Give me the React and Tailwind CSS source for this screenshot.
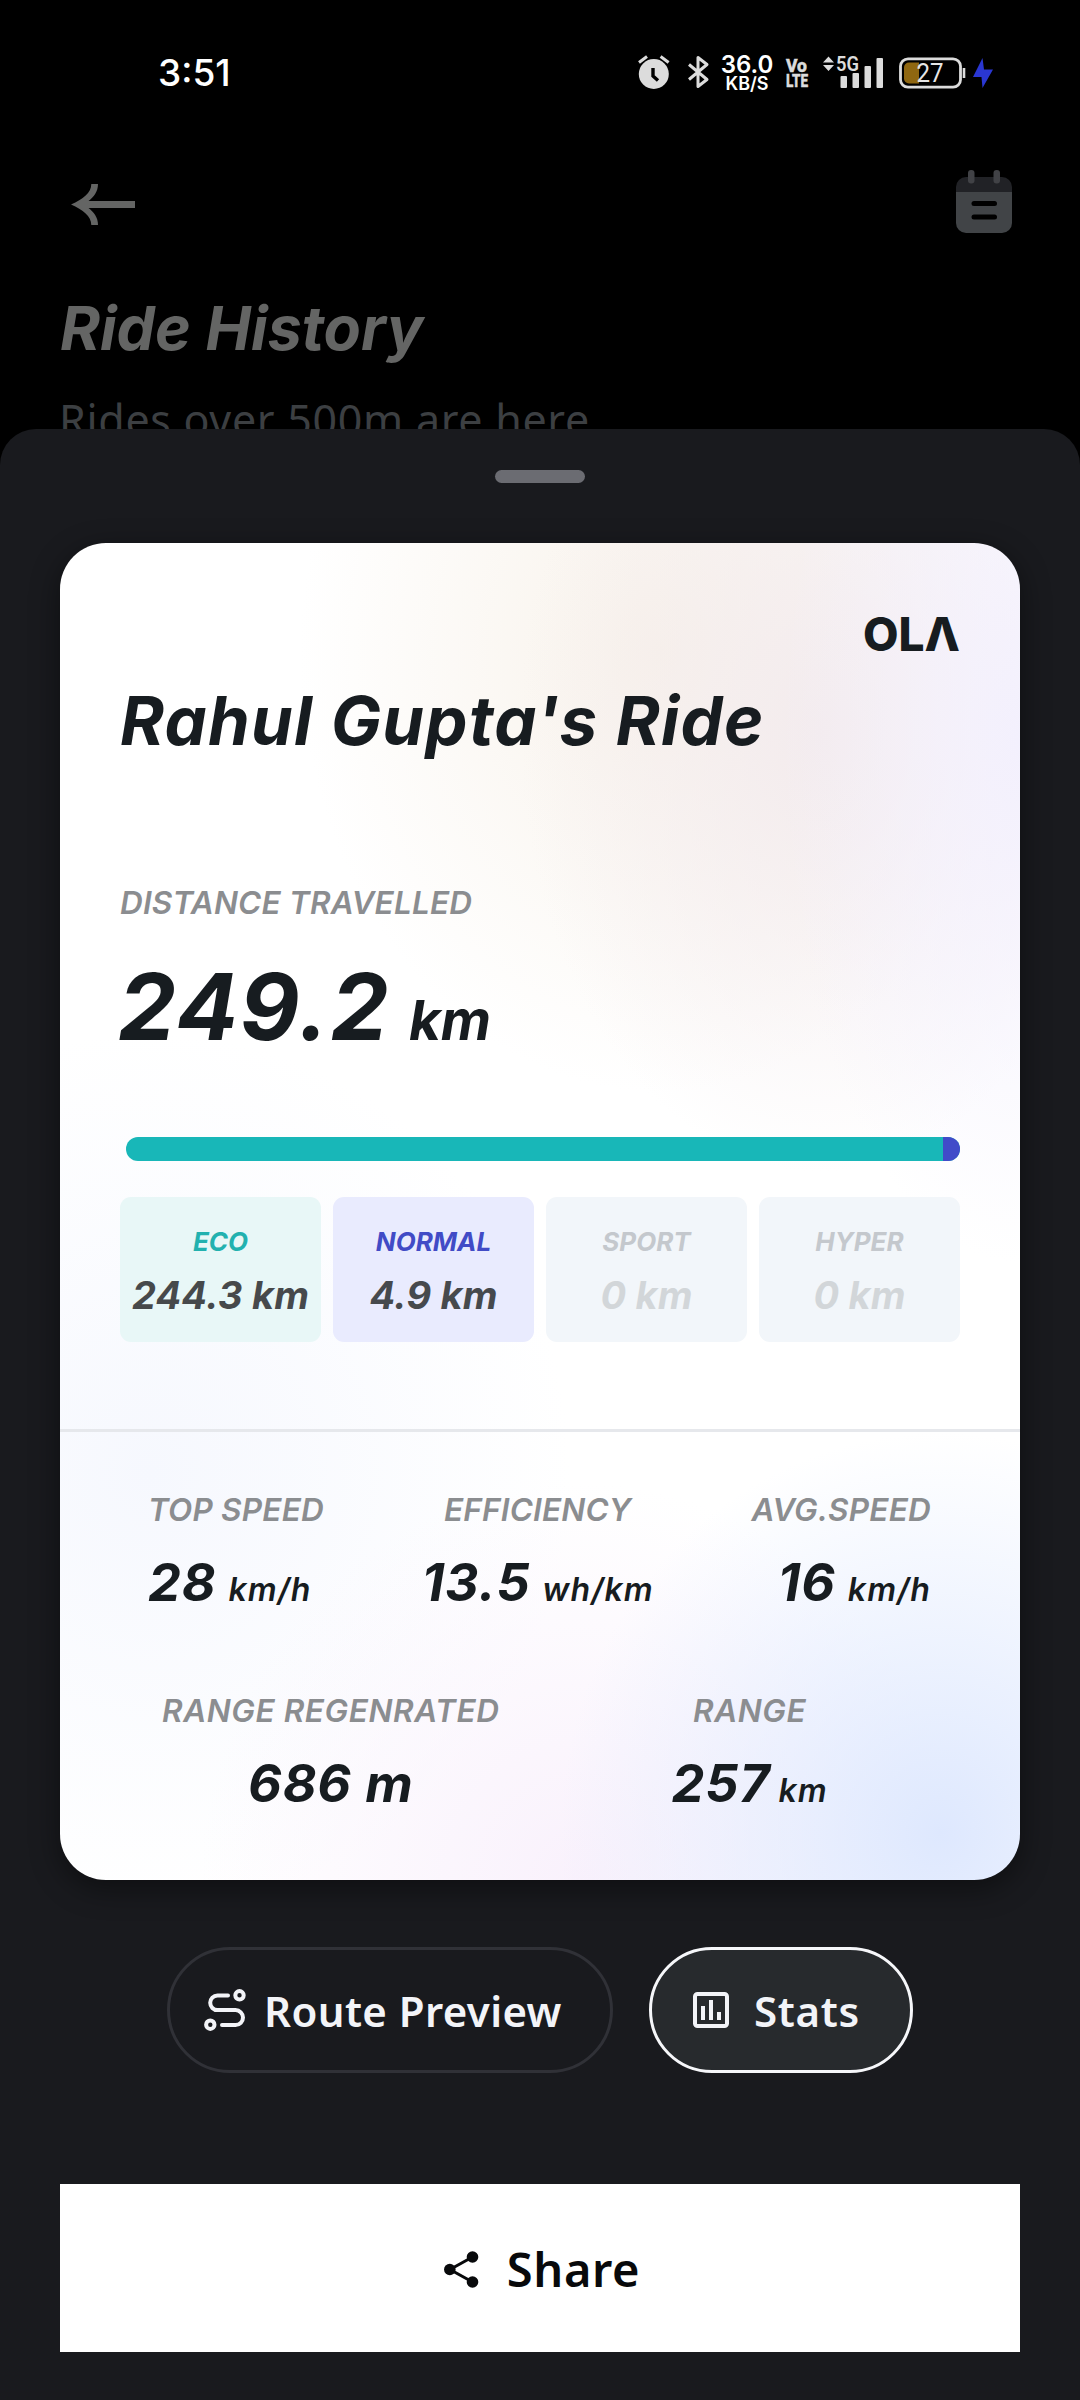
import clsx from "clsx";

const MODES = [
  { name: "ECO", value: "244.3 km", box: "bg-[#e8f7f7]", label: "text-[#22b1af]", text: "text-[#46494b]" },
  { name: "NORMAL", value: "4.9 km", box: "bg-[#e9ebfe]", label: "text-[#414bc6]", text: "text-[#46494d]" },
  { name: "SPORT", value: "0 km", box: "bg-[#f2f6fa]", label: "text-[#c4c8cd]", text: "text-[#d2d6d9]" },
  { name: "HYPER", value: "0 km", box: "bg-[#f2f6fa]", label: "text-[#c4c8cd]", text: "text-[#d2d6d9]" },
];

const AlarmIcon = () => (
  <svg width="32" height="34" viewBox="0 0 32 34" fill="none">
    <circle cx="15.8" cy="19" r="15" fill="#dcdcdc" />
    <path d="M1 7.5 9 1.5M30.6 7.5 22.6 1.5" stroke="#dcdcdc" strokeWidth="3" />
    <path d="M15 13v8l5 4.5" stroke="#000" strokeWidth="3.4" />
  </svg>
);

const BluetoothIcon = () => (
  <svg width="22" height="34" viewBox="0 0 22 34" fill="none">
    <path
      d="M1 9.5 19 24.5 10 31.5V2.5l9 7L1 24.5"
      stroke="#dcdcdc"
      strokeWidth="3"
      strokeLinejoin="round"
    />
  </svg>
);

const VolteIcon = () => (
  <svg
    width="22"
    height="32"
    viewBox="0 0 22 32"
    fill="#dcdcdc"
    stroke="#dcdcdc"
    strokeWidth="0.5"
    fontFamily="Roboto, sans-serif"
    fontWeight="800"
    fontSize="18.5"
    className="overflow-visible"
  >
    <text x="0" y="14.5" textLength="21" lengthAdjust="spacingAndGlyphs">Vo</text>
    <text x="0" y="30" textLength="22" lengthAdjust="spacingAndGlyphs">LTE</text>
  </svg>
);

const SignalIcon = () => (
  <svg width="60" height="34" viewBox="0 0 60 34" fill="#dcdcdc" className="overflow-visible">
    <path d="M0 7.5 5.5 1.5 11 7.5ZM0 10 5.5 16 11 10Z" />
    <text x="13" y="16" fontSize="20" fontFamily="Roboto, sans-serif" fontWeight="600" textLength="23" lengthAdjust="spacingAndGlyphs">5G</text>
    <rect x="17.5" y="21" width="6.5" height="12" rx="1" />
    <rect x="29.5" y="18" width="6.5" height="15" rx="1" />
    <rect x="41.5" y="11" width="6.5" height="22" rx="1" />
    <rect x="53.5" y="3" width="6.5" height="30" rx="1" />
  </svg>
);

const BatteryIcon = () => (
  <svg width="67" height="32" viewBox="0 0 67 32" fill="none">
    <rect x="1.5" y="1.8" width="60" height="28.4" rx="7.5" stroke="#dcdcdc" strokeWidth="2.8" />
    <path d="M20 5.5H10a5 5 0 0 0-5 5v11a5 5 0 0 0 5 5H20Z" fill="#8f6711" />
    <path d="M65 11v10" stroke="#dcdcdc" strokeWidth="2.6" />
    <text x="17.5" y="24.5" fontSize="25" fontFamily="Roboto, sans-serif" fill="#e6e6e6" textLength="27" lengthAdjust="spacingAndGlyphs">27</text>
  </svg>
);

const BoltIcon = () => (
  <svg width="20" height="30" viewBox="0 0 20 30">
    <path d="M9.5 0 0 19h8.5L9.5 30 20 11.5h-9Z" fill="#2a37d2" />
  </svg>
);

const BackIcon = () => (
  <svg width="64" height="41" viewBox="0 0 64 41" className="mt-[5px]">
    <path
      d="M0 20.5C12 15 20.3 9 20.3 0H27c0 8-4.5 13-9.5 17H64v7H17.5C22.5 28 27 33 27 41h-6.7C20.3 32 12 26 0 20.5Z"
      fill="#646564"
    />
  </svg>
);

const CalendarIcon = () => (
  <svg width="56" height="63" viewBox="0 0 56 63" className="mb-px">
    <path d="M0 22V17A10 10 0 0 1 10 7H46A10 10 0 0 1 56 17V22Z" fill="#212226" />
    <path d="M0 22H56V53A10 10 0 0 1 46 63H10A10 10 0 0 1 0 53Z" fill="#414447" />
    <rect x="12" y="0" width="6.5" height="13.5" rx="3" fill="#414246" />
    <rect x="37.5" y="0" width="6.5" height="13.5" rx="3" fill="#414246" />
    <rect x="15.5" y="31" width="25.5" height="5" rx="2.5" fill="#000" />
    <rect x="15.5" y="44.5" width="25.5" height="5" rx="2.5" fill="#000" />
  </svg>
);

const RouteIcon = () => (
  <svg width="42" height="42" viewBox="0 0 42 42" fill="none" stroke="#f3f4f8" strokeWidth="4" strokeLinecap="round">
    <circle cx="35.5" cy="6.3" r="4.2" />
    <circle cx="6.3" cy="35.7" r="4.2" />
    <path d="M24 6.5H13.5a7.3 7.3 0 0 0 0 14.6H31.5a7.5 7.5 0 0 1 0 15H18" />
  </svg>
);

const StatsIcon = () => (
  <svg width="36" height="36" viewBox="0 0 36 36" fill="none" stroke="#f3f4f8" strokeWidth="4">
    <rect x="2" y="2" width="32" height="32" rx="2.5" />
    <path d="M10 14v14M18 8v20M26 20v8" />
  </svg>
);

const ShareIcon = () => (
  <svg width="35" height="37" viewBox="0 0 35 37" fill="#08090b">
    <path d="M28.5 6 6 18.5 28.5 31" fill="none" stroke="#08090b" strokeWidth="3" />
    <circle cx="28.5" cy="6" r="5.8" />
    <circle cx="5.8" cy="18.5" r="5.8" />
    <circle cx="28.5" cy="31" r="5.8" />
  </svg>
);

const Label = ({ children, className }) => (
  <p
    className={clsx(
      "text-[31.5px] leading-[40px] font-semibold whitespace-nowrap text-[#8b8d90] italic",
      className
    )}
  >
    {children}
  </p>
);

const Stat = ({ label, value, unit, align, gap = "gap-[12px]", labelClass = "tracking-[0.2px]" }) => (
  <div className={clsx("flex flex-col gap-[23px]", align)}>
    <Label className={labelClass}>{label}</Label>
    <div className={clsx("flex h-[60px] items-baseline whitespace-nowrap text-[#171c20] italic", gap)}>
      <span className="text-[52px] leading-[60px] font-bold tracking-[0.9px]">{value}</span>
      {unit && <span className="text-[32px] leading-none font-semibold tracking-[1.1px]">{unit}</span>}
    </div>
  </div>
);

const StatusBar = () => (
  <div className="flex h-[146px] items-center justify-between pr-[87px] pl-[158px]">
    <span className="text-[37px] leading-[40px] font-medium text-white">3:51</span>
    <div className="flex items-center">
      <div className="mb-[2px] flex">
        <AlarmIcon />
      </div>
      <div className="mb-[2px] ml-[18px] flex">
        <BluetoothIcon />
      </div>
      <div className="ml-[12px] flex w-[50px] flex-col items-center pt-[2px] whitespace-nowrap text-white">
        <span className="text-[24px] leading-[19px] font-semibold">36.0</span>
        <span className="text-[18px] leading-[19px] font-semibold">KB/S</span>
      </div>
      <div className="mb-[1px] ml-[14px] flex">
        <VolteIcon />
      </div>
      <div className="mb-[3px] ml-[15px] flex">
        <SignalIcon />
      </div>
      <div className="mb-[1px] ml-[16px] flex">
        <BatteryIcon />
      </div>
      <div className="mb-[1px] ml-[7px] flex">
        <BoltIcon />
      </div>
    </div>
  </div>
);

const RideCard = () => (
  <div className="mx-[60px] mt-[60px] h-[1337px] overflow-hidden rounded-[46px] bg-white bg-[radial-gradient(ellipse_240px_520px_at_960px_200px,#f3f0fdff,#f3f0fd00),radial-gradient(ellipse_300px_440px_at_760px_190px,#f3ebedff,#f3ebed00),radial-gradient(ellipse_360px_440px_at_600px_110px,#f8f2eaff,#f8f2ea00),radial-gradient(ellipse_380px_400px_at_880px_1290px,#dee8feff,#dee8fe00),radial-gradient(ellipse_380px_400px_at_520px_1340px,#f9f1fcff,#f9f1fc00),radial-gradient(ellipse_420px_440px_at_90px_930px,#f6f8feff,#f6f8fe00)] font-[Inter,sans-serif] shadow-[0_8px_30px_rgba(0,0,0,0.45)]">
    <div className="px-[60px] pt-[74px]">
      <div className="flex h-[34px] items-center justify-end">
        <span className="text-[46px] leading-[34px] font-extrabold text-[#171c20]">OLΛ</span>
      </div>
      <h2 className="mt-[30px] text-[67px] leading-[80px] font-bold tracking-[1.3px] whitespace-nowrap text-[#171c20] italic">
        Rahul Gupta's Ride
      </h2>
      <Label className="mt-[122px] tracking-[0.2px]">DISTANCE TRAVELLED</Label>
      <div className="mt-[34px] flex h-[100px] items-baseline gap-[19px] whitespace-nowrap text-[#171c20] italic">
        <span className="-ml-[2px] text-[92px] leading-[100px] font-bold tracking-[1.5px]">249.2</span>
        <span className="text-[55px] leading-none font-bold">km</span>
      </div>

      <div className="mt-[80px] ml-[6px] flex h-[24px] overflow-hidden rounded-full bg-[#18b7b8]">
        <div className="ml-auto w-[17px] bg-[#414bc9]" />
      </div>

      <div className="mt-[36px] grid grid-cols-4 gap-[12px]">
        {MODES.map((mode) => (
          <div
            key={mode.name}
            className={clsx(
              "flex h-[145px] flex-col items-center rounded-[11px] pt-[30px] whitespace-nowrap italic",
              mode.box
            )}
          >
            <span className={clsx("text-[26px] leading-[30px] font-bold", mode.label)}>{mode.name}</span>
            <span className={clsx("mt-[18px] text-[38px] leading-[40px] font-bold tracking-[0.2px]", mode.text)}>
              {mode.value}
            </span>
          </div>
        ))}
      </div>
    </div>

    <div className="mt-[87px] h-[3px] bg-[#e6e8ec]" />

    <div className="mt-[58px] flex justify-between pr-[89px] pl-[88px]">
      <Stat label="TOP SPEED" value="28" unit="km/h" />
      <Stat label="EFFICIENCY" value="13.5" unit="wh/km" align="items-center" />
      <Stat label="AVG.SPEED" value="16" unit="km/h" align="items-end" />
    </div>
    <div className="mt-[78px] flex gap-[172px] pl-[102px]">
      <Stat label="RANGE REGENRATED" value="686 m" align="items-center" labelClass="tracking-[0.6px]" />
      <Stat label="RANGE" value="257" unit="km" align="items-center" gap="gap-[8px]" labelClass="tracking-[0.6px]" />
    </div>
  </div>
);

export default function App() {
  return (
    <div className="flex h-[2400px] w-[1080px] flex-col overflow-hidden bg-black font-['Noto_Sans',sans-serif]">
      <header className="h-[429px] shrink-0 overflow-hidden font-[Inter,sans-serif]">
        <StatusBar />
        <div className="flex h-[112px] items-center justify-between pr-[68px] pl-[71px]">
          <BackIcon />
          <CalendarIcon />
        </div>
        <h1 className="mt-[35px] ml-[60px] text-[61px] leading-[70px] font-bold whitespace-nowrap text-[#646564] italic">
          Ride History
        </h1>
        <p className="mt-[27px] ml-[59px] font-['Noto_Sans',sans-serif] text-[43px] leading-[60px] tracking-[0.7px] whitespace-nowrap text-[#3c3f42]">
          Rides over 500m are here
        </p>
      </header>

      <main className="flex-1 rounded-t-[36px] bg-[#191a1e] pt-[41px]">
        <div className="mx-auto h-[13px] w-[90px] rounded-full bg-[#6b6c72]" />
        <RideCard />

        <div className="mt-[67px] flex justify-center gap-[36px] text-[42px] font-semibold text-[#f3f4f8]">
          <button className="flex h-[126px] w-[446px] items-center gap-[18px] rounded-full border-3 border-[#303137] pl-[34px] tracking-[0.4px] whitespace-nowrap">
            <RouteIcon />
            Route Preview
          </button>
          <button className="flex h-[126px] w-[264px] items-center gap-[25px] rounded-full border-3 border-[#f6f7fa] bg-[#272a2d] pl-[41px] tracking-[0.7px] whitespace-nowrap">
            <StatsIcon />
            Stats
          </button>
        </div>

        <button className="mx-[60px] mt-[111px] flex h-[168px] w-[960px] items-center justify-center gap-[28px] bg-white pt-[2px] pl-[4px] text-[47px] font-semibold tracking-[0.6px] text-[#08090b]">
          <ShareIcon />
          Share
        </button>
      </main>
    </div>
  );
}
